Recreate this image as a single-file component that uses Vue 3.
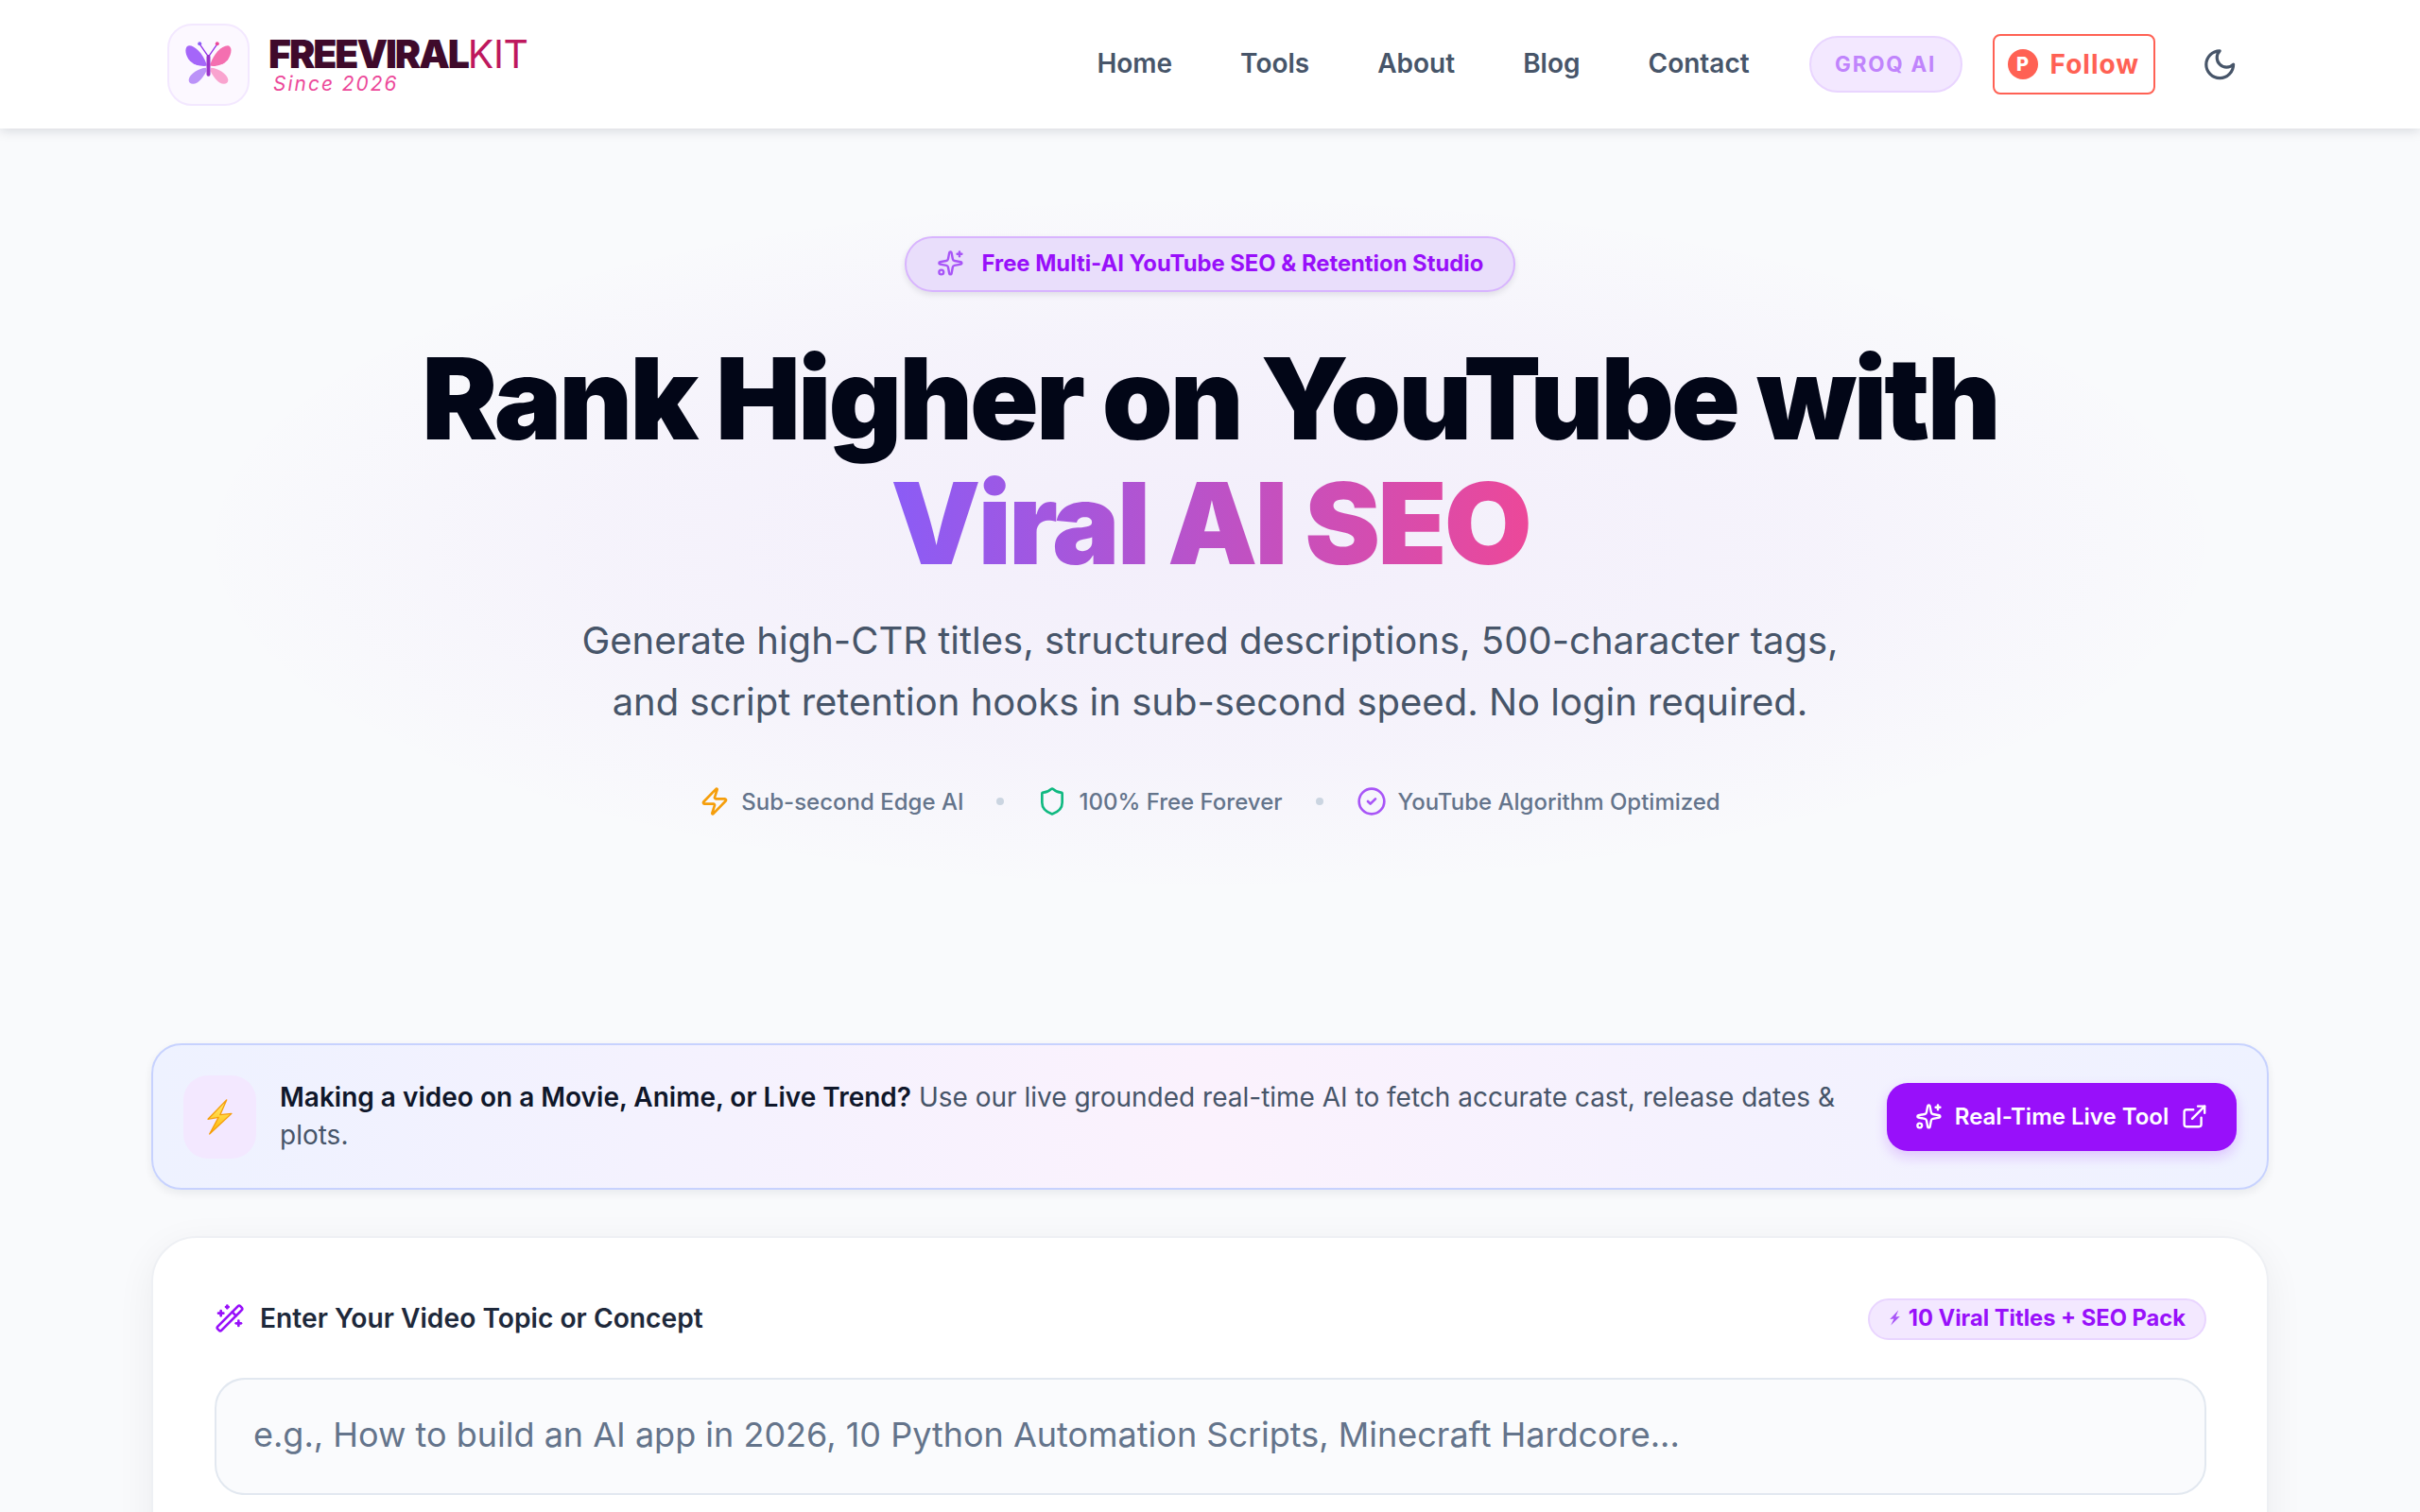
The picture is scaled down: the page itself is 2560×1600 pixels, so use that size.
<script setup>
const navLinks = ['Home', 'Tools', 'About', 'Blog', 'Contact'];
</script>

<template>
  <div class="page">
    <header class="topbar">
      <a class="brand">
        <span class="brand-tile">
          <svg class="butterfly" viewBox="130 122 160 160">
            <path d="M208 174 182 136M212 174 238 136" stroke="#9333ea" stroke-width="4" fill="none" />
            <circle cx="182" cy="135" r="6" fill="#8b5cf6" />
            <circle cx="238" cy="135" r="6" fill="#ec4899" />
            <path d="M204 200C192 165 165 140 148 141 134 143 134 165 146 184 158 202 184 208 204 206Z" fill="#a566f9" />
            <path d="M216 200C226 170 250 141 272 141 286 143 286 165 272 186 260 202 236 208 216 206Z" fill="#f46fb0" />
            <path d="M202 212C180 212 150 232 147 250 147 264 162 266 174 259 188 250 198 232 204 222Z" fill="#bb92f8" />
            <path d="M218 212C240 212 270 232 273 250 273 264 258 266 246 259 232 250 222 232 216 222Z" fill="#f9a4cf" />
            <rect x="204" y="170" width="12" height="69" rx="6" fill="#9a31c9" />
          </svg>
        </span>
        <span class="brand-text">
          <span class="brand-name">FREEVIRAL<span class="brand-kit">KIT</span></span>
          <span class="brand-since">Since 2026</span>
        </span>
      </a>
      <nav class="nav">
        <a v-for="link in navLinks" :key="link" class="nav-link">{{ link }}</a>
      </nav>
      <span class="groq-pill">GROQ AI</span>
      <a class="follow-btn">
        <span class="ph-dot">P</span>
        Follow
      </a>
      <svg class="moon icon" viewBox="0 0 24 24">
        <path d="M12 3a6 6 0 0 0 9 9 9 9 0 1 1-9-9Z" />
      </svg>
    </header>

    <main class="content">
      <section class="hero">
        <div class="hero-pill">
          <svg class="icon pill-icon" viewBox="0 0 24 24">
            <path d="M11.017 2.814a1 1 0 0 1 1.966 0l1.051 5.558a2 2 0 0 0 1.594 1.594l5.558 1.051a1 1 0 0 1 0 1.966l-5.558 1.051a2 2 0 0 0-1.594 1.594l-1.051 5.558a1 1 0 0 1-1.966 0l-1.051-5.558a2 2 0 0 0-1.594-1.594l-5.558-1.051a1 1 0 0 1 0-1.966l5.558-1.051a2 2 0 0 0 1.594-1.594z" />
            <path d="M20 2v4" /><path d="M22 4h-4" /><circle cx="4" cy="20" r="2" />
          </svg>
          Free Multi-AI YouTube SEO &amp; Retention Studio
        </div>
        <h1 class="hero-title">
          Rank Higher on YouTube with<br />
          <span class="hero-gradient">Viral AI SEO</span>
        </h1>
        <p class="hero-sub">
          Generate high-CTR titles, structured descriptions, 500-character tags,<br />
          and script retention hooks in sub-second speed. No login required.
        </p>
        <div class="trust-row">
          <span class="trust-item">
            <svg class="icon trust-icon zap" viewBox="0 0 24 24">
              <path d="M4 14a1 1 0 0 1-.78-1.63l9.9-10.2a.5.5 0 0 1 .86.46l-1.92 6.02A1 1 0 0 0 13 10h7a1 1 0 0 1 .78 1.63l-9.9 10.2a.5.5 0 0 1-.86-.46l1.92-6.02A1 1 0 0 0 11 14z" />
            </svg>
            Sub-second Edge AI
          </span>
          <span class="trust-dot"></span>
          <span class="trust-item">
            <svg class="icon trust-icon shield" viewBox="0 0 24 24">
              <path d="M20 13c0 5-3.5 7.5-7.66 8.95a1 1 0 0 1-.67-.01C7.5 20.5 4 18 4 13V6a1 1 0 0 1 1-1c2 0 4.5-1.2 6.24-2.72a1.17 1.17 0 0 1 1.52 0C14.51 3.81 17 5 19 5a1 1 0 0 1 1 1z" />
            </svg>
            100% Free Forever
          </span>
          <span class="trust-dot"></span>
          <span class="trust-item">
            <svg class="icon trust-icon check" viewBox="0 0 24 24">
              <circle cx="12" cy="12" r="10" /><path d="m9 12 2 2 4-4" />
            </svg>
            YouTube Algorithm Optimized
          </span>
        </div>
      </section>

      <section class="live-banner">
        <span class="banner-tile">
          <svg class="emoji-bolt" viewBox="205 218 88 122">
            <defs>
              <linearGradient id="boltFill" x1="0" y1="0" x2="0" y2="1">
                <stop offset="0" stop-color="#fff176" />
                <stop offset="1" stop-color="#ffb300" />
              </linearGradient>
            </defs>
            <path d="M271 224 211 286 245 280 216 334 287 268 250 272Z" fill="url(#boltFill)" stroke="#f59e0b" stroke-width="4" stroke-linejoin="round" />
          </svg>
        </span>
        <p class="banner-text">
          <strong>Making a video on a Movie, Anime, or Live Trend?</strong>
          Use our live grounded real-time AI to fetch accurate cast, release dates &amp; plots.
        </p>
        <a class="live-btn">
          <svg class="icon btn-icon" viewBox="0 0 24 24">
            <path d="M11.017 2.814a1 1 0 0 1 1.966 0l1.051 5.558a2 2 0 0 0 1.594 1.594l5.558 1.051a1 1 0 0 1 0 1.966l-5.558 1.051a2 2 0 0 0-1.594 1.594l-1.051 5.558a1 1 0 0 1-1.966 0l-1.051-5.558a2 2 0 0 0-1.594-1.594l-5.558-1.051a1 1 0 0 1 0-1.966l5.558-1.051a2 2 0 0 0 1.594-1.594z" />
            <path d="M20 2v4" /><path d="M22 4h-4" /><circle cx="4" cy="20" r="2" />
          </svg>
          Real-Time Live Tool
          <svg class="icon btn-icon" viewBox="0 0 24 24">
            <path d="M15 3h6v6" /><path d="M10 14 21 3" />
            <path d="M18 13v6a2 2 0 0 1-2 2H5a2 2 0 0 1-2-2V8a2 2 0 0 1 2-2h6" />
          </svg>
        </a>
      </section>

      <section class="topic-card">
        <div class="topic-head">
          <label class="topic-label">
            <svg class="icon wand" viewBox="0 0 24 24">
              <path d="m21.64 3.64-1.28-1.28a1.21 1.21 0 0 0-1.72 0L2.36 18.64a1.21 1.21 0 0 0 0 1.72l1.28 1.28a1.2 1.2 0 0 0 1.72 0L21.64 5.36a1.2 1.2 0 0 0 0-1.72" />
              <path d="m14 7 3 3" /><path d="M5 6v4" /><path d="M19 14v4" /><path d="M10 2v2" />
              <path d="M7 8H3" /><path d="M21 16h-4" /><path d="M11 3H9" />
            </svg>
            Enter Your Video Topic or Concept
          </label>
          <span class="pack-badge">
            <svg class="pack-bolt" viewBox="0 0 12 16">
              <path d="M9.5.5 1 9.5l4-.6L2 15.5 11 6.5l-4.2.5Z" fill="#a855f7" />
            </svg>
            10 Viral Titles + SEO Pack
          </span>
        </div>
        <input
          class="topic-input"
          type="text"
          placeholder="e.g., How to build an AI app in 2026, 10 Python Automation Scripts, Minecraft Hardcore..."
        />
      </section>
    </main>
  </div>
</template>

<style>
html,
body {
  margin: 0;
  background: #f8fafc;
}
</style>

<style scoped>
.page {
  height: 1600px;
  overflow: hidden;
  background: #f9fafc;
  font-family: Inter, "Noto Sans", sans-serif;
  color: #0f172a;
}

.icon {
  fill: none;
  stroke: currentColor;
  stroke-width: 2;
  stroke-linecap: round;
  stroke-linejoin: round;
  flex-shrink: 0;
}

/* header */
.topbar {
  position: relative;
  z-index: 2;
  height: 136px;
  box-sizing: border-box;
  padding: 0 193px 0 177px;
  display: flex;
  align-items: center;
  background: #fff;
  box-shadow: 0 2px 12px rgba(15, 23, 42, 0.15);
}

.brand {
  display: flex;
  align-items: center;
  gap: 20px;
}

.brand-tile {
  width: 87px;
  height: 87px;
  box-sizing: border-box;
  display: flex;
  align-items: center;
  justify-content: center;
  border: 2px solid #f3e8ff;
  border-radius: 26px;
  background: #fcf8ff;
}

.butterfly {
  width: 53px;
  height: 53px;
}

.brand-text {
  display: flex;
  flex-direction: column;
}

.brand-name {
  font-size: 41px;
  line-height: 42px;
  font-weight: 900;
  letter-spacing: -0.05em;
  color: #3f0a2b;
}

.brand-kit {
  font-weight: 400;
  color: #be185d;
  letter-spacing: -0.01em;
}

.brand-since {
  margin: 0 0 0 5px;
  font-size: 20.8px;
  line-height: 22px;
  font-style: italic;
  letter-spacing: 0.1em;
  color: #ec4899;
}

.nav {
  margin-left: auto;
  display: flex;
  gap: 72px;
  padding-bottom: 2px;
}

.nav-link {
  font-size: 28px;
  font-weight: 600;
  color: #475569;
}

.groq-pill {
  margin-left: 63px;
  width: 162px;
  height: 60px;
  box-sizing: border-box;
  display: flex;
  align-items: center;
  justify-content: center;
  padding-bottom: 2px;
  border: 2px solid #e9d5ff;
  border-radius: 30px;
  background: #f3e8ff;
  color: #c084fc;
  font-size: 22.4px;
  font-weight: 700;
  letter-spacing: 0.08em;
}

.follow-btn {
  margin-left: 32px;
  width: 172px;
  height: 64px;
  box-sizing: border-box;
  display: flex;
  align-items: center;
  gap: 13px;
  padding-left: 14px;
  border: 2px solid #ff6154;
  border-radius: 8px;
  background: #fff;
  color: #ff6154;
  font-size: 28px;
  font-weight: 700;
  letter-spacing: 0.035em;
}

.ph-dot {
  width: 32px;
  height: 32px;
  border-radius: 50%;
  display: flex;
  align-items: center;
  justify-content: center;
  background: #ff6154;
  color: #fff;
  font-size: 20px;
  font-weight: 800;
  letter-spacing: 0;
}

.moon {
  margin-left: 49px;
  width: 38.4px;
  height: 38.4px;
  color: #475569;
}

/* hero */
.hero {
  margin: 68px 204px 0;
  height: 740px;
  box-sizing: border-box;
  padding-top: 46px;
  display: flex;
  flex-direction: column;
  align-items: center;
  text-align: center;
  background: radial-gradient(closest-side, rgba(147, 51, 234, 0.06), rgba(147, 51, 234, 0.035) 60%, rgba(147, 51, 234, 0));
}

.hero-pill {
  height: 59px;
  box-sizing: border-box;
  display: flex;
  align-items: center;
  gap: 19px;
  padding: 0 32px 2px;
  border: 2px solid #d8b4fe;
  border-radius: 30px;
  background: #e9defb;
  box-shadow: 0 3px 6px rgba(15, 23, 42, 0.1);
  color: #9810fa;
  font-size: 23.8px;
  font-weight: 700;
}

.pill-icon {
  width: 28.8px;
  height: 28.8px;
  color: #a855f7;
}

.hero-title {
  margin: 47px 0 0;
  font-size: 120px;
  line-height: 132px;
  font-weight: 900;
  letter-spacing: -0.025em;
  color: #020617;
}

.hero-gradient {
  background: linear-gradient(90deg, #8b5cf6, #ec4899);
  -webkit-background-clip: text;
  background-clip: text;
  color: transparent;
}

.hero-sub {
  margin: 25px 0 0;
  font-size: 40px;
  line-height: 65px;
  color: #475569;
}

.trust-row {
  margin-top: 53px;
  height: 40px;
  display: flex;
  align-items: center;
  gap: 35px;
  font-size: 24px;
  font-weight: 500;
  color: #64748b;
}

.trust-item {
  display: flex;
  align-items: center;
  gap: 12px;
}

.trust-icon {
  width: 32px;
  height: 32px;
}

.zap {
  color: #f59e0b;
}

.shield {
  color: #10b981;
}

.check {
  color: #a855f7;
}

.trust-dot {
  width: 8px;
  height: 8px;
  border-radius: 50%;
  background: #cbd5e1;
}

/* content below hero */
.content {
  padding: 0;
}

.live-banner {
  margin: 160px 160px 0;
  height: 155px;
  box-sizing: border-box;
  padding: 0 32px;
  display: flex;
  align-items: center;
  gap: 25px;
  border: 2px solid #c7d2fe;
  border-radius: 32px;
  background: linear-gradient(90deg, #eef2ff, #fbf2fd 50%, #eef2ff);
  box-shadow: 0 4px 10px rgba(15, 23, 42, 0.07);
}

.banner-tile {
  width: 77px;
  height: 88px;
  flex-shrink: 0;
  display: flex;
  align-items: center;
  justify-content: center;
  border-radius: 26px;
  background: #f3e8ff;
}

.emoji-bolt {
  width: 29px;
  height: 40px;
}

.banner-text {
  flex: 1;
  margin: 0 0 2px;
  font-size: 28px;
  line-height: 40px;
  color: #475569;
}

.banner-text strong {
  font-weight: 600;
  color: #0f172a;
}

.live-btn {
  margin-left: 24px;
  width: 370px;
  height: 72px;
  flex-shrink: 0;
  box-sizing: border-box;
  display: flex;
  align-items: center;
  justify-content: center;
  gap: 13px;
  border-radius: 22px;
  background: #9810fa;
  box-shadow: 0 6px 14px rgba(152, 16, 250, 0.2);
  color: #fff;
  font-size: 24px;
  font-weight: 600;
}

.btn-icon {
  width: 28.8px;
  height: 28.8px;
}

.topic-card {
  margin: 49px 160px 0;
  height: 400px;
  box-sizing: border-box;
  padding: 64px 64px 0 65px;
  border: 2px solid #eef0f4;
  border-radius: 48px;
  background: #fff;
  box-shadow: 0 10px 40px rgba(15, 23, 42, 0.06);
}

.topic-head {
  height: 44px;
  display: flex;
  align-items: center;
  justify-content: space-between;
}

.topic-label {
  display: flex;
  align-items: center;
  gap: 16px;
  padding-bottom: 3px;
  font-size: 28.2px;
  font-weight: 600;
  color: #1e293b;
}

.wand {
  width: 32px;
  height: 32px;
  color: #9810fa;
}

.pack-badge {
  height: 44px;
  box-sizing: border-box;
  display: flex;
  align-items: center;
  gap: 8px;
  padding: 0 20px 3px 20px;
  border: 2px solid #e9d5ff;
  border-radius: 22px;
  background: #f3e8ff;
  color: #9810fa;
  font-size: 23.7px;
  font-weight: 700;
}

.pack-bolt {
  width: 13px;
  height: 17px;
}

.topic-input {
  display: block;
  width: 100%;
  height: 124px;
  margin-top: 40px;
  box-sizing: border-box;
  padding: 0 39px 5px;
  border: 2px solid #e2e8f0;
  border-radius: 32px;
  background: #fafbfd;
  font-family: Inter, "Noto Sans", sans-serif;
  font-size: 36px;
  color: #0f172a;
  outline: none;
}

.topic-input::placeholder {
  color: #64748b;
  opacity: 1;
}
</style>
